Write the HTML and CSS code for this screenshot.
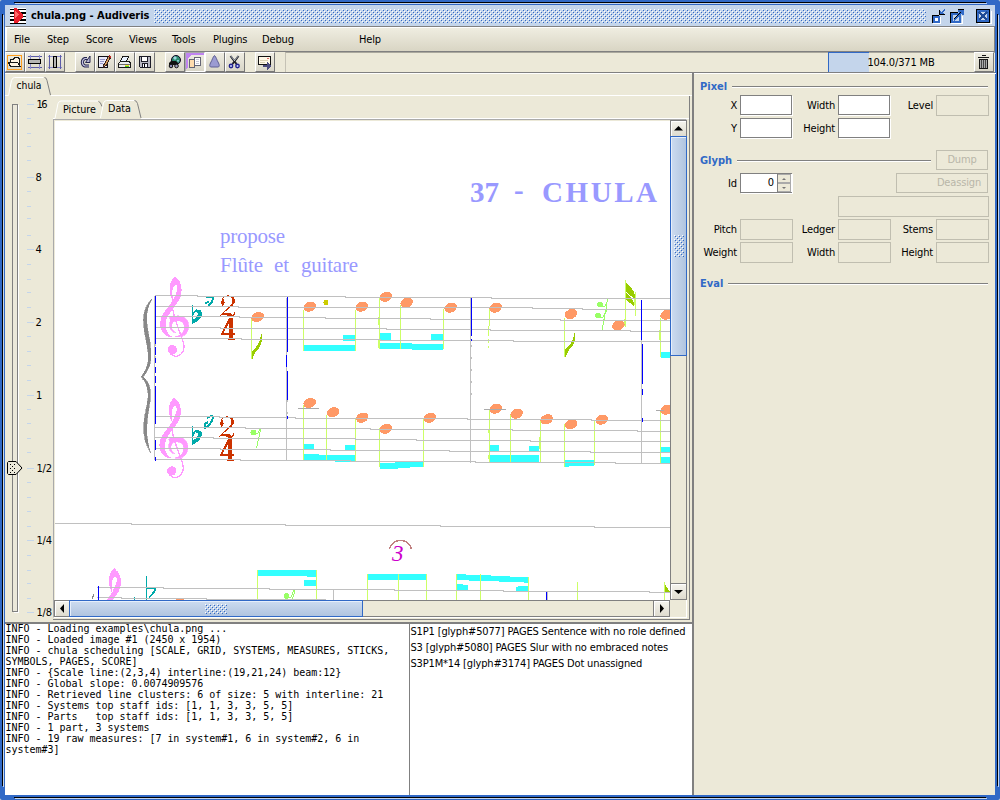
FILE: index.html
```html
<!DOCTYPE html>
<html lang="en">
<head>
<meta charset="utf-8">
<title>chula.png - Audiveris</title>
<link rel="stylesheet" href="styles.css">
</head>
<body>
<div class="window">
  <svg class="frame-lines" width="1000" height="800" shape-rendering="crispEdges">
    <path d="M14 2.500H986M2.500 14V786M14 797.500H986M997.500 14V786" stroke="#000"/>
    <path d="M15 3.500H987M3.500 15V787M15 798.500H987M998.500 15V787" stroke="#c4d5eb"/>
  </svg>
  <header class="titlebar">
    <svg class="app-icon" width="16" height="16" shape-rendering="crispEdges">
      <path fill="#fff" d="M0 0h16v16H0z"/><path d="M0 1h16v1H0zM0 4h16v2H0zM0 8h16v1H0zM0 11h16v2H0zM0 15h16v1H0z" fill="#000"/>
      <path d="M4 0h3l6 7v2l-6 6H4z" fill="#e8202c"/><path d="M5 2l4 5-4 3z" fill="#ff6a6a"/>
    </svg>
    <h1>chula.png - Audiveris</h1>
    <svg class="bumps" width="772" height="14" shape-rendering="crispEdges">
      <defs><pattern id="dots" width="4" height="4" patternUnits="userSpaceOnUse"><path d="M0 0h1v1H0zM2 2h1v1H2z" fill="#fff"/><path d="M1 1h1v1H1zM3 3h1v1H3z" fill="#3169c6"/></pattern></defs>
      <rect width="772" height="14" fill="url(#dots)"/>
    </svg>
    <svg class="win-controls" width="62" height="16" viewBox="0 0 62 16" shape-rendering="crispEdges">
      <g fill="none" stroke="#fff"><path d="M2 15.500h7.500v-7M20 15.500h11.500v-8M47 15.500h13.500v-13"/></g>
      <path d="M1 7h7v8H1z" fill="#000"/><path d="M2 8h7v7H2z" fill="#3169c6"/><path d="M4 10h3v3H4z" fill="#fff"/>
      <path d="M8 2h1v4h5v1H8z" fill="#000"/><path d="M9 6V3h1v1l3-3 1 1-3 3h2v1z" fill="#3169c6"/>
      <path d="M19 4h8v1h-7v10h-1z" fill="#000"/><path d="M20 5h10v10H20z" fill="#3169c6"/><path d="M22 7h6v6h-6z" fill="#c4d5eb"/>
      <path d="M22 12l7-7-2-1V1h6v6h-2l-1-1-7 7z" fill="#3169c6"/><path d="M27 1.500h6M22.500 11.500l7-7" stroke="#000"/>
      <path d="M45.500 1.500h13v13h-13z" fill="#3169c6" stroke="#000"/><path d="M48 4h8v8h-8z" fill="#c4d5eb"/><path d="M48 4l8 8M56 4l-8 8" stroke="#1e4a96" stroke-width="2.200"/>
    </svg>
  </header>
  <nav class="menubar"><span>File</span><span>Step</span><span>Score</span><span>Views</span><span>Tools</span><span>Plugins</span><span>Debug</span><span>Help</span></nav>
  <div class="toolbar">
    <div class="group">
      <button><svg viewBox="0 0 20 20"><path d="M2.500 3.500h14v14h-14z" fill="none" stroke="#ff9d1c"/><path d="M5.500 9.500v-2h3l1-2h4l1 2v5M3.500 10.500h9l3 4h-10z" fill="#fff4e4" stroke="#181818"/><path d="M5 14.500h11" stroke="#181818"/></svg></button>
      <button><svg viewBox="0 0 20 20"><path d="M3 4.500h14M3 15.500h14" stroke="#5b5ba8"/><path d="M5.500 3v14M14.500 3v14" stroke="#8a8acb"/><path d="M3.500 7.500h12v4h-12z" fill="#b5b5b5" stroke="#000"/></svg></button>
      <button><svg viewBox="0 0 20 20"><path d="M3 4.500h14M3 15.500h14" stroke="#8a8acb"/><path d="M4.500 3v14M15.500 3v14" stroke="#5b5ba8"/><path d="M8.500 4.500h3v11h-3z" fill="#b5b5b5" stroke="#000"/></svg></button>
    </div>
    <div class="group">
      <button><svg class="smooth" viewBox="0 0 20 20"><path d="M14 14h-4a4 4 0 0 1 0-7.500h2" fill="none" stroke="#24244c" stroke-width="3.200"/><path d="M10.500 10.500l4.500-6.500v6.500z" fill="#b6b6d8" stroke="#24244c"/><path d="M14 14h-4a4 4 0 0 1 0-7.500h2" fill="none" stroke="#c0c0e0" stroke-width="1.200"/></svg></button>
      <button><svg viewBox="0 0 20 20"><path d="M3.500 4.500h9v11h-9z" fill="#eaeafa" stroke="#101018"/><path d="M5 7.500h5M5 9.500h4M5 11.500h3" stroke="#9696c8"/><path d="M13.500 4.500l2 1-5 9-2 1v-2z" fill="#d69b5e" stroke="#382018"/><path d="M14 4l2 1" stroke="#bf2525" stroke-width="2"/></svg></button>
      <button><svg viewBox="0 0 20 20"><path d="M7.500 4.500h6l-2 5h-6z" fill="#eaf2ff" stroke="#181818"/><path d="M3.500 11.500l2-2h9l1 2v4h-12z" fill="#ededed" stroke="#181818"/><path d="M4 12.500h11" stroke="#6b6b6b"/><path d="M10 13.500h4" stroke="#f7dd23"/><path d="M10 14.500h4" stroke="#45c924"/></svg></button>
      <button><svg viewBox="0 0 20 20"><path d="M4.500 4.500h11v11h-10l-1-1z" fill="#b8b8c4" stroke="#1c1c28"/><path d="M6.500 4.500h6v5h-6z" fill="#fff" stroke="#1c1c28"/><path d="M7.500 11.500h5v4h-5z" fill="#f6f6ff" stroke="#1c1c28"/><path d="M9.500 12v3" stroke="#000"/></svg></button>
    </div>
    <div class="group">
      <button><svg class="smooth" viewBox="0 0 20 20"><circle cx="11" cy="8" r="4.500" fill="#2c8c70" stroke="#102"/><path d="M8 6l2-2 2 2-2 2zM12 8l2 0-1 3z" fill="#9fd5df"/><path d="M4 11l2-2h5l2 2v4h-3v-2H8v2H4z" fill="#111"/><circle cx="6" cy="14" r="1.800" fill="#8a8ab8" stroke="#111"/><circle cx="11.500" cy="14" r="1.800" fill="#a0a0c0" stroke="#111"/></svg></button>
      <button class="open"><svg viewBox="0 0 20 20"><path d="M1 1h18v2H6L3 6v9l-2 2z" fill="#c084f0"/><path d="M4.500 7.500h5v8h-5z" fill="#ffdcae" stroke="#656575"/><path d="M9.500 5.500h6v8h-6z" fill="#fff" stroke="#656575"/><path d="M11 7.500h3M11 9.500h3M11 11.500h3" stroke="#c8c8d8"/></svg></button>
      <button><svg class="smooth" viewBox="0 0 20 20"><path d="M9.500 3.500c-2 2-2 4-4 7.500-1 2-1 3 0 4h8c1-1 1-2 0-4-2-3.500-2-5.500-4-7.500z" fill="#9b9bd2" stroke="#5f5f94"/></svg></button>
      <button><svg class="smooth" viewBox="0 0 20 20"><path d="M5.500 4l6 8M13.500 4l-6 8" stroke="#202028" stroke-width="2"/><path d="M5.800 4l4 5M13.200 4l-4 5" stroke="#d9e3f1" stroke-width=".7"/><circle cx="6" cy="14" r="1.700" fill="#c8d4ff" stroke="#22228f" stroke-width="1.400"/><circle cx="12.500" cy="14" r="1.700" fill="#c8d4ff" stroke="#22228f" stroke-width="1.400"/></svg></button>
    </div>
    <div class="group">
      <button><svg viewBox="0 0 20 20"><path d="M3.500 4.500h12v8h-12z" fill="#fff8e7" stroke="#121212"/><path d="M5 8.500h8M5 10.500h5" stroke="#ddd3b5"/><path d="M12 6.500h2" stroke="#d66"/><path d="M8 13h4v-3l4 4-4 4v-3H8z" fill="#4c4c7e"/></svg></button>
    </div>
    <div class="memory"><div class="gauge"><span class="fill"></span><span class="label">104.0/371 MB</span></div>
      <button><svg viewBox="0 0 20 20"><path d="M8 3.500h4M4 5.500h11" stroke="#161616" stroke-width="1.500"/><path d="M5.500 7.500h8v9h-8z" fill="#a9a9a9" stroke="#161616"/><path d="M7.500 8v8M9.500 8v8M11.500 8v8" stroke="#444"/></svg></button></div>
  </div>
  <main class="workspace">
    <section class="left">
      <div class="sheet">
        <svg class="sheet-tab" width="688" height="21" viewBox="5 75 688 21">
          <path d="M5 95.500h3.500l3-15q1-3 3-3h29" fill="none" stroke="#fff"/><path d="M44.500 77.500q2 0 2.500 3l3.500 14.500" fill="none" stroke="#808080"/><path d="M51 95.500h641" stroke="#fff"/>
          <text x="16.500" y="89" textLength="25" lengthAdjust="spacingAndGlyphs">chula</text>
        </svg>
        <div class="sheet-body">
          <svg class="zoomer" width="48" height="526" viewBox="5 96 48 526">
            <g shape-rendering="crispEdges"><path d="M12.500 104.500h5v507h-5z" fill="#ebe8da" stroke="#808080"/><path d="M18.500 105v507.500h-5" fill="none" stroke="#fff"/>
            <path d="M27 104.500h7M27 177.500h7M27 249.500h7M27 322.500h7M27 395.500h7M27 468.500h7M27 540.500h7M27 612.500h7M27 118.500h4M27 133.500h4M27 146.500h4M27 160.500h4M27 191.500h4M27 206.500h4M27 218.500h4M27 235.500h4M27 264.500h4M27 279.500h4M27 292.500h4M27 307.500h4M27 336.500h4M27 351.500h4M27 365.500h4M27 380.500h4M27 409.500h4M27 423.500h4M27 438.500h4M27 452.500h4M27 482.500h4M27 497.500h4M27 511.500h4M27 526.500h4M27 555.500h4M27 570.500h4M27 583.500h4M27 598.500h4" stroke="#c4d5eb"/></g>
            <path d="M8.500 461.500h7.500l6 6.500-6 6.500H8.500l-1-1v-11z" fill="#ebe8da" stroke="#000"/><path d="M10 464h1v1h-1zm4 0h1v1h-1zm-2 2h1v1h-1zm-2 2h1v1h-1zm4 0h1v1h-1zm-2 2h1v1h-1zm-2 2h1v1h-1zm4 0h1v1h-1z" fill="#000"/>
            <g><text x="36.500" y="108" textLength="11">16</text><text x="35.500" y="181">8</text><text x="35.500" y="253">4</text><text x="35.500" y="326">2</text><text x="36" y="399">1</text><text x="36.500" y="472" textLength="15.500">1/2</text><text x="36.500" y="544" textLength="15.500">1/4</text><text x="36.500" y="616" textLength="15.500">1/8</text></g>
          </svg>
          <div class="view">
            <svg class="view-tabs" width="637" height="23" viewBox="53 96 637 23">
              <path d="M53 118.500h2l3-15q1-2.500 3-2.500h37" fill="none" stroke="#fff"/><path d="M98.500 101.500q2 0 3.500 5" fill="none" stroke="#808080"/>
              <path d="M100.500 118l3-15q1-2.500 3-2.500h28" fill="none" stroke="#fff"/><path d="M134.500 100.500q2 0 3 3l3.500 14.500" fill="none" stroke="#808080"/><path d="M141 118.500h548" stroke="#fff"/>
              <text x="63" y="113" textLength="33" lengthAdjust="spacingAndGlyphs">Picture</text><text x="108" y="112" textLength="23" lengthAdjust="spacingAndGlyphs">Data</text>
            </svg>
            <div class="scrollpane">
              <svg class="score" width="615" height="479" viewBox="55 121 615 479" shape-rendering="crispEdges">
                <defs>
                  <g id="clef"><path stroke="#f9f" stroke-width="3" d="M375 320C394 334 399 365 386 390C370 415 346 438 345 462C345 482 353 495 366 501C342 498 331 481 332 458C335 425 366 408 376 378C386 360 387 345 376 343C365 350 362 370 369 392C356 365 358 334 375 320z"/><path stroke="#f9f" stroke-width="2" d="M358 443C398 428 416 448 416 468C416 491 400 504 376 500C394 497 405 485 403 468C401 452 384 449 371 454C361 463 362 480 377 488C359 486 354 462 362 453z"/><path d="M373 390l-6 22 7 32 25 70c10 30-8 46-25 45l-14-8" fill="none" stroke="#f9f" stroke-width="4"/><circle cx="367" cy="539" r="14"/></g>
                  <g id="flat"><path d="M427 405v57M427 440q7-20 15-22" fill="none" stroke="#0aa" stroke-width="4"/><path d="M437 420q19-5 19 12-1 17-30 31v-12q20-10 17-23-5-6-15-1z"/></g>
                  <g id="two"><path d="M515 408q-6-28 19-32 22 0 21 20-2 10-36 34 22-4 28 4 5-1 6-8h3q-2 12-8 14-8 2-18-4-8-3-19 1l34-34q5-17-5-23-11-6-22 6 8 5 5 18z"/></g>
                  <g id="four"><path d="M538 443h11v46h7v6h-7v10h5v4h-20v-4h4v-10h-24v-5zM538 458l-18 31h18z"/></g>
                  <ellipse id="note" rx="6.500" ry="4.800" transform="rotate(-22)"/>
                </defs>
                <g fill="#99f" stroke="none" class="lyrics">
                  <g class="heading"><text x="470" y="202" textLength="29">37</text><text x="514" y="200">-</text><text x="542" y="202" textLength="115">CHULA</text></g>
                  <text x="220" y="243" textLength="65">propose</text><text x="220" y="272" textLength="43">Flûte</text><text x="274" y="272" textLength="15">et</text><text x="301" y="272" textLength="57">guitare</text>
                </g>
                <path fill="#888" stroke="#888" stroke-width=".6" d="M151.500 299C140 312 143 325 147 345C149 358 150 365 141.500 376.500C149 386 149 395 147 405C142 425 142 440 150.500 452.500C145.500 438 146 425 149 408C152 392 151 385 143.500 376.500C152 366 151.500 358 150 342C146 322 144.500 312 152 299z"/>
                <g fill="#33ffff">
                  <g transform="translate(50 170) scale(.33333)"><path d="M762 525h154v18H762zM880 495h36v18h-36z"/></g>
                  <g transform="translate(370 170) scale(.33333)"><path d="M30 520h96v3h94v16h-94v-3H30zM30 489h34v20H30zM184 492h36v18h-36zM873 546h30v17h-30z"/></g>
                  <g transform="translate(50 370) scale(.33333)"><path d="M762 252h45v3h108v20h-60v-4h-93zM762 221h30v20h-30zM885 225h30v16h-30z"/></g>
                  <g transform="translate(370 370) scale(.33333)"><path d="M30 280h46v-4h84v15h-40v3H83v4H30zM360 255h148v22H360zM360 225h27v18h-27zM478 228h30v15h-30zM585 270h88v18h-76v3h-12zM873 231h30v15h-30zM873 261h30v19h-30z"/></g>
                  <g transform="translate(50 500) scale(.33333)"><path d="M622 210h178v21h-29v-3H622zM762 240h37v18h-37zM953 222h40v18h-40z"/></g>
                  <g transform="translate(370 500) scale(.33333)"><path d="M-5 222h175v18H-5zM261 222h27v3h74v3l113 3v18h-13v-3h-75v-3h-90v-4h-36zM261 252h18v3h15v15h-33zM438 261h6v-3h30v15h-36z"/></g>
                </g>
                <path stroke="#cf6" fill="none" d="M251.500 317v42M303.500 310v41M355.500 310v41M379.500 298v51M378.500 317v8M378.500 339v9M400.500 305v44M443.500 309v40M489.500 309v17M488.500 326v10M488.500 339v4M488.500 346v2M564.500 318v39M625.500 280v47M624.500 319v7M635.500 292v24M634.500 297v8M660.500 318v39M659.500 330v10M303.500 405v55M326.500 415v45M355.500 418v43M379.500 428v39M423.500 418v49M489.500 410v53M488.500 429v4M488.500 455v4M510.500 415v47M540.500 420v42M539.500 437v12M564.500 424v43M594.500 421v44M660.500 411v52M257.500 570v30M316.500 570v30M367.500 574v26M398.500 574v26M426.500 574v26M456.500 574v26M480.500 574v26M528.500 577v23M577.500 582v18M664.500 582v18"/>
                <g fill="#ff9966">
                  <use href="#note" x="257.700" y="317"/><use href="#note" x="309.700" y="306.700"/><use href="#note" x="361.700" y="306.700"/><use href="#note" x="386" y="296.700"/><use href="#note" x="406.700" y="302.700"/><use href="#note" x="450.700" y="307.700"/><use href="#note" x="495.700" y="307.700"/><use href="#note" x="571" y="314"/><use href="#note" x="618.300" y="325.300"/><use href="#note" x="666.700" y="314.700"/>
                  <use href="#note" x="309.700" y="403"/><use href="#note" x="333" y="412.300"/><use href="#note" x="362.300" y="417.700"/><use href="#note" x="386" y="428.700"/><use href="#note" x="430" y="417.700"/><use href="#note" x="495.700" y="408.700"/><use href="#note" x="516.700" y="413.700"/><use href="#note" x="546.700" y="419.300"/><use href="#note" x="571" y="424.300"/><use href="#note" x="601.700" y="419.700"/><use href="#note" x="666.700" y="409.700"/>
                  <path d="M176 599h8v1h-8z"/>
                </g>
                <circle cx="326" cy="302.500" r="2.500" fill="#cc0"/>
                <g fill="#f9f"><use href="#clef" transform="translate(50 170) scale(.33333)"/><use href="#clef" transform="translate(49.300 291.300) scale(.33333)"/><use href="#clef" transform="translate(-10.700 462) scale(.33333)"/></g>
                <g fill="#0aa"><use href="#flat" transform="translate(50 170) scale(.33333)"/><use href="#flat" transform="translate(50 290.700) scale(.33333)"/>
                  <g fill="none" stroke="#0aa" stroke-width="2"><path d="M206 296.500h7q1 4-5 10M205 303l4-1M207 418q5-3 6-1-1 7-8 11v-4l3-2M147 587.500h8q1 4-6 10"/><path stroke-width="1" d="M146.500 576v24M134.500 597v3"/></g></g>
                <g fill="#c30"><g transform="translate(50 170) scale(.33333)"><use href="#two"/><use href="#four"/></g><g transform="translate(49 291) scale(.33333)"><use href="#two"/><use href="#four"/></g></g>
                <path fill="#9c0" d="M252 360v-9q8-6 9-17h1q1 12-7 19zM565 358v-9q9-6 9-16h1q1 11-6 17zM626 282q9 9 9 14v3l-9-7zM626 293q8 5 8 13l-8-6zM665 583q1 5 5 8v2h-5z"/>
                <g fill="#99ff66" stroke="none"><circle cx="253.500" cy="432.500" r="3"/><circle cx="600" cy="304.500" r="3"/><circle cx="598" cy="315.500" r="3"/><circle cx="286.500" cy="596" r="3"/><path d="M600 306l5 0 2-4v-3M598 317l5 0 3-5v-4M255 434l3-1 3-5M256.500 448l4-18M607 304l-5 26M288 598l3-1 3-7v4l-2 6" fill="none" stroke="#99ff66"/></g>
                <g fill="none" stroke="#c0c0c0">
                  <path d="M155 295.500H197v1H345v1H491v1H670M155 306.500H238v1H532v1H582v1H670M155 316.500H239v1H325v1H430v1H560v1H670M155 327.500H220v1H386v1H490v1H630v1H670M155 338.500H241v1H380v1H513v1H670"/>
                  <path d="M155 416.500H219v1H295v1H467v1H591v1H670M155 427.500H245v1H370v1H512v1H637v1H670M155 437.500H213v1H355v1H416v1H530v1H670M155 448.500H220v1H330v1H449v1H590v1H670M155 459.500H240v1H350v1H475v1H615v1H670"/>
                  <path d="M55 523.500h76v1h154v1h155v1h154v1h76M97 587.500h66v1h106v1h125v1h109v1h146v1h21M97 597.500h24v1h85v1h120"/>
                  <path d="M154.500 296v164M286.500 298v162M470.500 297v166M641.500 301v162M333.500 590v10M547.500 592v8"/>
                  <path d="M471.500 345v60M155.500 344v80M287.500 400v15" stroke-dasharray="2 10"/>
                </g>
                <path d="M298 408.500h21M484 409.500h22M656 410.500h8" stroke="#aaa"/>
                <path fill="none" stroke="#00f" d="M155.500 296v48M155.500 347v8M155.500 358v5M155.500 367v6M155.500 376v7M155.500 386v38M155.500 440v10M155.500 457v4M287.500 297v55M286.500 355v12M287.500 371v29M287.500 416v3M471.500 298v38M471.500 339v2M641.500 300v40M642.500 344v40M642.500 389v6M642.500 418v4M98.500 586v14M546.500 592v8"/>
                <path d="M389.500 549c3-11 18-12 22 0" fill="none" stroke="#c08080" stroke-width="1.500"/>
                <text class="tuplet" x="392" y="561" fill="#c0c">3</text>
                <path d="M92 599l2-5" stroke="#888"/>
              </svg>
              <div class="vscroll"><svg class="arrow" viewBox="0 0 15 15"><path d="M7.500 5L12 9.500H3z"/></svg><div class="thumb"><svg width="10" height="22"><rect width="10" height="22" fill="url(#dots)"/></svg></div><span class="grow"></span><svg class="arrow" viewBox="0 0 15 15"><path d="M3 6h9L7.500 10z"/></svg></div>
              <div class="hscroll"><svg class="arrow" viewBox="0 0 15 15"><path d="M9 3v9L5 7.500z"/></svg><div class="thumb"><svg width="22" height="10"><rect width="22" height="10" fill="url(#dots)"/></svg></div><span class="grow"></span><svg class="arrow" viewBox="0 0 15 15"><path d="M6 3v9l4-4.500z"/></svg></div>
            </div>
          </div>
        </div>
      </div>
      <div class="messages">
<pre class="log">INFO - Loading examples\chula.png ...
INFO - Loaded image #1 (2450 x 1954)
INFO - chula scheduling [SCALE, GRID, SYSTEMS, MEASURES, STICKS,
SYMBOLS, PAGES, SCORE]
INFO - {Scale line:(2,3,4) interline:(19,21,24) beam:12}
INFO - Global slope: 0.0074909576
INFO - Retrieved line clusters: 6 of size: 5 with interline: 21
INFO - Systems top staff ids: [1, 1, 3, 3, 5, 5]
INFO - Parts   top staff ids: [1, 1, 3, 3, 5, 5]
INFO - 1 part, 3 systems
INFO - 19 raw measures: [7 in system#1, 6 in system#2, 6 in
system#3]</pre>
        <ul class="errors"><li>S1P1 [glyph#5077] PAGES Sentence with no role defined</li><li>S3 [glyph#5080] PAGES Slur with no embraced notes</li><li>S3P1M*14 [glyph#3174] PAGES Dot unassigned</li></ul>
      </div>
    </section>
    <aside class="boards">
      <section class="board pixel">
        <h2>Pixel</h2>
        <div class="fields"><label>X</label><span class="field"></span><label>Width</label><span class="field"></span><label>Level</label><span class="field off"></span>
        <label>Y</label><span class="field"></span><label>Height</label><span class="field"></span></div>
      </section>
      <section class="board glyph">
        <div class="head"><h2>Glyph</h2><span class="ghost dump">Dump</span></div>
        <div class="fields"><label>Id</label><span class="spinner"><b>0</b><i class="up"></i><i class="down"></i></span><span class="ghost deassign">Deassign</span>
        <span class="field off shape"></span>
        <label>Pitch</label><span class="field off"></span><label>Ledger</label><span class="field off"></span><label>Stems</label><span class="field off"></span>
        <label>Weight</label><span class="field off"></span><label>Width</label><span class="field off"></span><label>Height</label><span class="field off"></span></div>
      </section>
      <section class="board"><h2>Eval</h2></section>
    </aside>
  </main>
</div>
</body>
</html>
```
FILE: styles.css
```css
* { box-sizing: border-box; }
body { margin: 0; font: 11px/13px "DejaVu Sans Condensed", "DejaVu Sans", sans-serif; letter-spacing: -0.16px; color: #000; background: #ebe8da; }
h1, h2, ul { margin: 0; padding: 0; }
svg { display: block; }
.window { position: relative; display: flex; flex-direction: column; width: 1000px; height: 800px; padding: 5px; border-radius: 2px; background: #3169c6; overflow: hidden; }
.frame-lines { position: absolute; left: 0; top: 0; pointer-events: none; }

.titlebar { display: flex; align-items: center; height: 21px; flex: none; background: #c4d5eb; padding: 0 2px 0 5px; }
.app-icon, .titlebar h1, .bumps, .win-controls { flex: none; }
.titlebar h1 { width: 118px; margin-left: 5px; font-size: 11px; line-height: 14px; letter-spacing: 0; white-space: nowrap; color: #000; }
.bumps { margin: 0 5px; }

.menubar { display: grid; grid-template-columns: 33px 39px 43px 43px 41px 49px 97px 1fr; flex: none; align-items: center; height: 26px; padding-left: 8px; border: 1px solid #808080; border-left-color: #fff; box-shadow: inset 1px 1px #fff; background: linear-gradient(#f0eee2, #d9d5c4); }

.toolbar { display: flex; flex: none; height: 21px; background: #ece9d8; border-bottom: 1px solid #808080; }
.group { display: flex; margin-right: 10px; }
button { display: block; flex: none; width: 20px; height: 20px; padding: 0; border: 1px solid; border-color: #fff #777 #777 #fff; background: linear-gradient(#efede3, #d9d6c8); }
button svg { width: 20px; height: 20px; margin: -1px; shape-rendering: crispEdges; }
button svg.smooth { shape-rendering: auto; }
button.open { border-color: #aaa #fff #fff #aaa; }
.memory { flex: 1; display: flex; justify-content: flex-end; border-left: 1px solid #c5c2b5; border-top: 1px solid #aaa89d; }
.memory button { margin: -1px 1px 0 0; }
.gauge { display: grid; grid-template-rows: 20px; width: 146px; margin-top: -1px; align-items: center; justify-items: center; }
.gauge span { grid-area: 1 / 1; }
.fill { justify-self: start; width: 41px; height: 20px; background: #c4d5eb; border-left: 1px solid #3169c6; border-top: 1px solid #3169c6; }

.workspace { display: flex; flex: 1; min-height: 0; background: #ece9d8; }
.left { width: 689px; padding-top: 2px; border-right: 2px solid #808080; box-shadow: inset 0 1px #fff; }
.sheet { height: 549px; border-bottom: 2px solid #808080; }
.sheet-body { display: flex; height: 526px; }
.zoomer, .view { flex: none; }
.view { width: 637px; height: 524px; border-right: 1px solid #808080; border-bottom: 1px solid #808080; }
text { font-family: "DejaVu Sans Condensed", "DejaVu Sans", sans-serif; font-size: 11px; letter-spacing: 0; }
.scrollpane { display: grid; grid-template: 479px 17px / 615px 17px; width: 634px; padding: 1px 0 0 1px; border: 1px solid; border-color: #aaa #fff #fff #aaa; }
.score { background: #fff; }
.lyrics text { font: 21px "Liberation Serif", serif; }
.lyrics .heading text { font: bold 29px "Liberation Serif", serif; }
.score .tuplet { font: italic 23px "Liberation Serif", serif; }
.vscroll, .hscroll { display: flex; background: #ece9d8; }
.vscroll { flex-direction: column; padding-bottom: 1px; border-left: 1px solid #808080; border-right: 1px solid #808080; }
.hscroll { padding-right: 1px; border-top: 1px solid #808080; border-bottom: 1px solid #808080; }
.arrow { flex: none; width: 15px; height: 15px; background: linear-gradient(#f5f4ee, #dfdccf); box-shadow: 0 0 0 1px #808080, inset 1px 1px #fff; }
.thumb { display: grid; place-items: center; border: 1px solid #3169c6; box-shadow: inset 1px 1px #e6effb; }
.vscroll .thumb { height: 220px; margin: 0 -1px; background: linear-gradient(90deg, #cddcf0, #b0c4df); }
.hscroll .thumb { width: 294px; margin: -1px 0 -1px -1px; background: linear-gradient(#cddcf0, #b0c4df); }
.grow { flex: 1; }

.messages { display: flex; height: 171px; background: #fff; }
.log { width: 405px; margin: 0; padding-left: .5px; border-right: 1px solid #808080; font: 10px/11px "DejaVu Sans Mono", monospace; letter-spacing: -0.025px; }
.log::before { content: ""; display: block; margin-top: -1px; }
.errors { list-style: none; padding-left: .5px; white-space: nowrap; line-height: 16px; }

.boards { flex: 1; padding: 5px 7px 0 6px; border-top: 1px solid #fff; }
.board { margin-bottom: 11px; }
h2 { display: flex; align-items: center; height: 14px; font-size: 11px; color: #3169c6; letter-spacing: 0; margin-right: 1px; }
h2::after { content: ""; flex: 1; height: 2px; margin-left: 5px; margin-top: 1px; background: linear-gradient(#808080 50%, #fff 50%); }
.fields { display: grid; grid-template-columns: 40px 53px 45px 53px 45px 53px; row-gap: 2px; margin-top: 2px; text-align: right; align-items: center; }
.fields label { padding-right: 3px; white-space: nowrap; }
.field, .spinner { display: block; border: 1px solid #808080; background: #fff; width: 52px; height: 20px; margin-bottom: 1px; box-shadow: 1px 1px #fff; }
.field.off { width: 53px; height: 21px; margin: 0; background: none; border-color: #c0beb0; box-shadow: none; }
.field.shape { grid-column: 4 / 7; width: 151px; }
.head { display: flex; align-items: center; gap: 4px; padding-right: 1px; }
.head h2 { flex: 1; }
.ghost { display: block; height: 20px; border: 1px solid #c0beb0; color: #b8b6a8; line-height: 18px; text-align: center; }
.dump { width: 52px; }
.deassign { grid-column: 3 / 7; width: 92px; justify-self: end; margin: 0 1px 1px 0; text-align: right; padding-right: 6px; }
.glyph { margin-bottom: 13px; }
.glyph .fields { margin-top: 3px; }
.spinner { display: grid; grid-template: 9px 9px / 37px 13px; border-right: 0; }
.spinner b { grid-row: 1 / 3; padding-right: 3px; border-right: 1px solid #808080; font-weight: normal; line-height: 18px; }
.spinner i { display: grid; place-items: center; border: 1px solid #aaa; border-left: 0; background: #ece9d8; }
.spinner i::after { content: ""; border: 2px solid transparent; }
.spinner .up::after { border-top: 0; border-bottom-color: #777; }
.spinner .down::after { border-bottom: 0; border-top-color: #777; }
```
